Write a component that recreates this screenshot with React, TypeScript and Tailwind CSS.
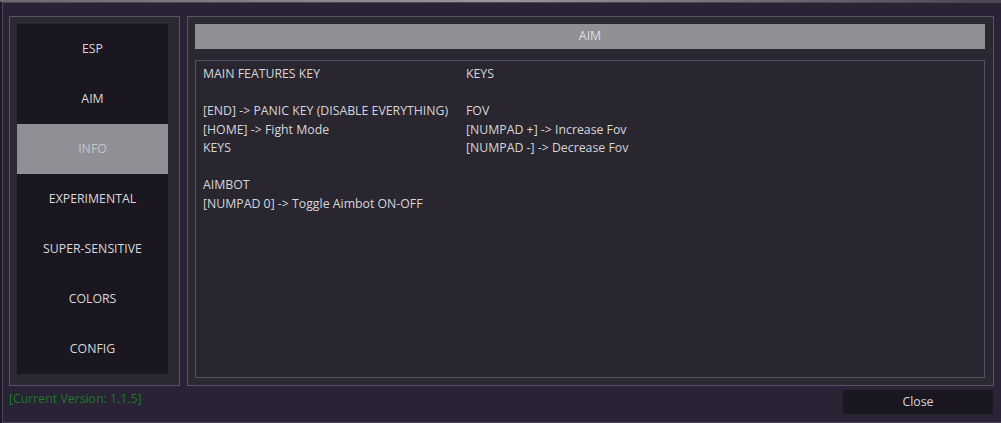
const tabs = ["ESP", "AIM", "INFO", "EXPERIMENTAL", "SUPER-SENSITIVE", "COLORS", "CONFIG"];

const leftLines = [
  "MAIN FEATURES KEY",
  "",
  "[END] -> PANIC KEY (DISABLE EVERYTHING)",
  "[HOME] -> Fight Mode",
  "KEYS",
  "",
  "AIMBOT",
  "[NUMPAD 0] -> Toggle Aimbot ON-OFF",
];

const rightLines = [
  "KEYS",
  "",
  "FOV",
  "[NUMPAD +] -> Increase Fov",
  "[NUMPAD -] -> Decrease Fov",
];

function Lines({ lines }: { lines: string[] }) {
  return (
    <div className="flex flex-col">
      {lines.map((l, i) => (
        <div key={i} className="h-[18.5px] whitespace-pre">
          {l || " "}
        </div>
      ))}
    </div>
  );
}

export default function App() {
  return (
    <div
      className="flex h-[423px] w-[1001px] flex-col overflow-hidden bg-[#1d1922] text-[12.3px]"
      style={{ fontFamily: '"Open Sans", "Noto Sans", sans-serif' }}
    >
      <div className="h-[2px] w-full bg-gradient-to-r from-[#6c6870] via-[#9a969c] to-[#4a4650]" />
      <div className="ml-[2px] flex h-[419px] flex-1 flex-col border-l border-t border-b border-[#4a4559] bg-[#2a2336] pl-[6px] pt-[13px]">
        <div className="flex h-[370px] gap-[7px]">
          {/* left nav */}
          <div className="h-full w-[171px] border border-[#58536a] bg-[#2b2832] pb-[10px] pl-[7px] pr-[11px] pt-[7px]">
            <div className="flex flex-col bg-[#1b1720]">
              {tabs.map((t) => (
                <div
                  key={t}
                  className={
                    t === "INFO"
                      ? "flex h-[50px] items-center justify-center bg-[#8f8f95] text-[#c6c6cc]"
                      : "flex h-[50px] items-center justify-center text-[#d9d8de]"
                  }
                >
                  {t}
                </div>
              ))}
            </div>
          </div>

          {/* right panel */}
          <div className="flex h-full w-[807px] flex-col border border-[#58536a] bg-[#2b2832] px-[7px] pb-[7px] pt-[7px]">
            <div className="flex h-[25px] w-[790px] items-center justify-center bg-[#8f9094] text-[#dedee2]">
              AIM
            </div>
            <div className="mt-[11px] flex w-[790px] flex-1 border border-[#55506a] bg-[#29262f] pl-[7px] pt-[4px] text-[#d6d6dc]">
              <div className="w-[263px]">
                <Lines lines={leftLines} />
              </div>
              <Lines lines={rightLines} />
            </div>
          </div>
        </div>

        <div className="flex items-start">
          <div className="mt-[4px] text-[#1c7e27]" style={{ filter: "blur(0.6px)" }}>
            [Current Version: 1.1.5]
          </div>
          <button
            type="button"
            className="ml-auto mr-[8px] mt-[4px] flex h-[24px] w-[150px] items-center justify-center bg-[#1b1720] text-[#d6d6dc]"
          >
            Close
          </button>
        </div>
      </div>
    </div>
  );
}
